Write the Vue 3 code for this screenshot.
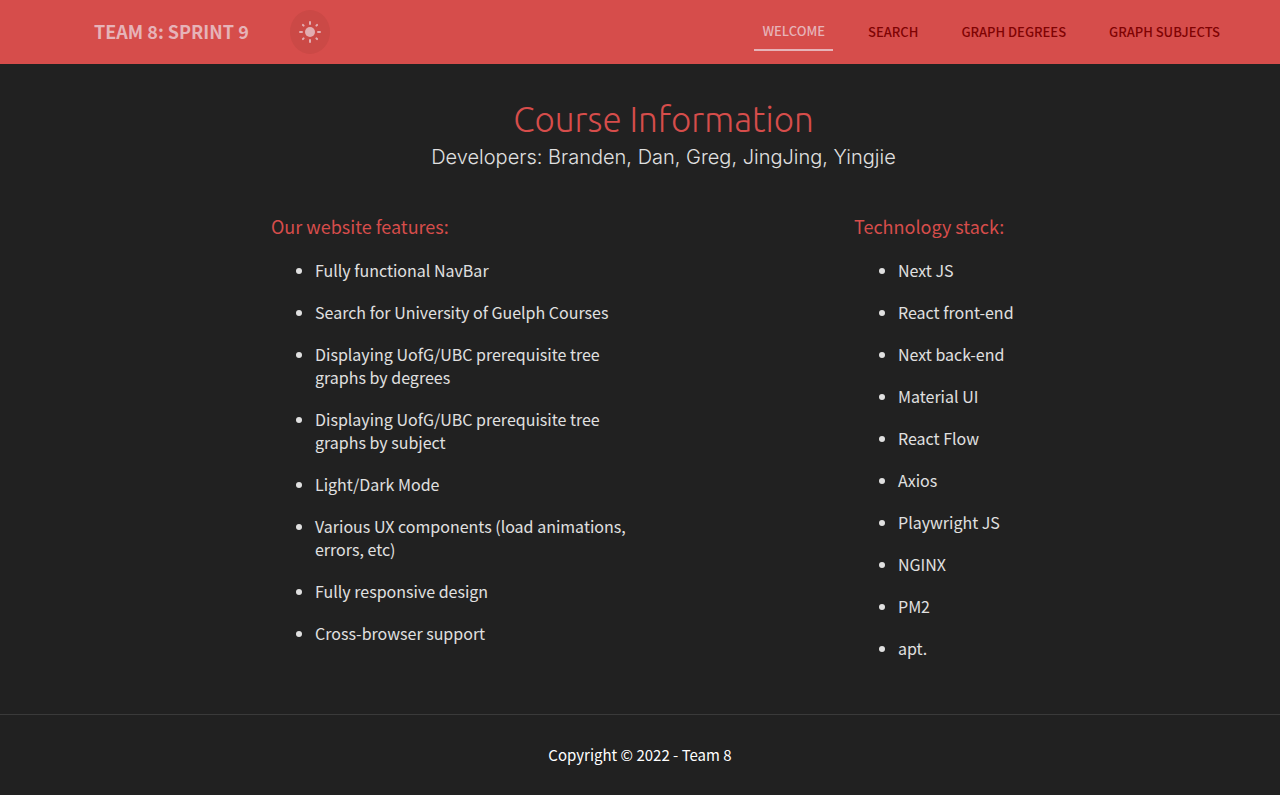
<script setup>
const links = ['Welcome', 'Search', 'Graph Degrees', 'Graph Subjects']
const features = [
  'Fully functional NavBar',
  'Search for University of Guelph Courses',
  'Displaying UofG/UBC prerequisite tree graphs by degrees',
  'Displaying UofG/UBC prerequisite tree graphs by subject',
  'Light/Dark Mode',
  'Various UX components (load animations, errors, etc)',
  'Fully responsive design',
  'Cross-browser support',
]
const stack = ['Next JS', 'React front-end', 'Next back-end', 'Material UI', 'React Flow', 'Axios', 'Playwright JS', 'NGINX', 'PM2', 'apt.']
const rays = [0, 45, 90, 135, 180, 225, 270, 315]
</script>

<template>
  <div class="page">
    <header class="bar">
      <a class="brand" href="#">TEAM 8: SPRINT 9</a>
      <button class="mode" type="button" aria-label="Toggle light and dark mode">
        <svg width="24" height="24" viewBox="0 0 24 24" fill="currentColor" aria-hidden="true">
          <circle cx="12" cy="12" r="5" />
          <rect v-for="a in rays" :key="a" x="11" y="1" :height="a % 90 ? 3 : 4" width="2" rx="1" :transform="`rotate(${a} 12 12)`" />
        </svg>
      </button>
      <nav class="nav">
        <a v-for="(link, i) in links" :key="link" href="#" class="link" :class="{ active: i === 0 }">{{ link }}</a>
      </nav>
    </header>

    <main class="main">
      <h1>Course Information</h1>
      <p class="developers">Developers: Branden, Dan, Greg, JingJing, Yingjie</p>
      <div class="columns">
        <section class="features">
          <h2>Our website features:</h2>
          <ul>
            <li v-for="item in features" :key="item">{{ item }}</li>
          </ul>
        </section>
        <section class="stack">
          <h2>Technology stack:</h2>
          <ul>
            <li v-for="item in stack" :key="item">{{ item }}</li>
          </ul>
        </section>
      </div>
    </main>

    <footer class="footer">Copyright © 2022 - Team 8</footer>
  </div>
</template>

<style>
body {
  margin: 0;
  background: #212121;
}
</style>

<style scoped>
.page {
  min-height: 100vh;
  background: #212121;
  color: #e0e0e0;
  font-family: "Noto Sans CJK JP", "Noto Sans", sans-serif;
}
.bar {
  display: flex;
  align-items: center;
  min-height: 64px;
  padding: 0 52px 0 94px;
  box-sizing: border-box;
  background: #d64d4b;
}
.brand {
  padding-bottom: 2px;
  color: #e6b3b8;
  font-size: 18px;
  font-weight: 700;
  line-height: 32px;
  text-decoration: none;
}
.mode {
  display: flex;
  align-items: center;
  justify-content: center;
  width: 40px;
  height: 44px;
  margin-left: 41px;
  padding: 0;
  border: 0;
  border-radius: 50%;
  background: #cb4946;
  color: #e2adb1;
}
.nav {
  display: flex;
  align-items: center;
  gap: 27px;
  margin-left: auto;
}
.link {
  padding: 6px 8px;
  color: #7f0303;
  font-size: 13px;
  font-weight: 500;
  line-height: 24px;
  text-decoration: none;
  text-transform: uppercase;
}
.link.active {
  border-bottom: 2px solid #e6b3b8;
  color: #e6b3b8;
}
.main {
  padding: 31px 0 54px 47px;
}
h1 {
  margin: 0;
  color: #d64d4b;
  font-family: Ubuntu, "Open Sans", sans-serif;
  font-size: 35px;
  font-weight: 300;
  line-height: 48px;
  text-align: center;
}
.developers {
  margin: 0;
  font-family: Inter, sans-serif;
  font-size: 20px;
  font-weight: 300;
  line-height: 28px;
  text-align: center;
}
.columns {
  display: grid;
  grid-template-columns: 375fr 426fr;
  column-gap: 208px;
  margin: 41px 0 0 224px;
}
h2 {
  margin: 0;
  color: #d64d4b;
  font-size: 18px;
  font-weight: 400;
  line-height: 28px;
}
ul {
  display: flex;
  flex-direction: column;
  gap: 19px;
  margin: 19px 0 0;
  padding-left: 44px;
}
li {
  font-size: 16px;
  line-height: 23px;
}
.features li {
  max-width: 320px;
}
.footer {
  padding: 24px;
  border-top: 1px solid #3a3a3a;
  color: #fff;
  font-size: 15px;
  line-height: 32px;
  text-align: center;
}
</style>
